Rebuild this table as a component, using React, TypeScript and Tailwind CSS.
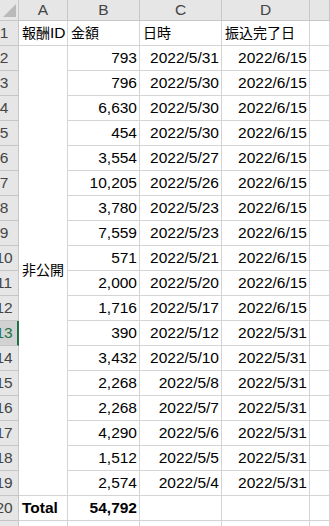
const rows: [string, string, string][] = [
  ["793", "2022/5/31", "2022/6/15"],
  ["796", "2022/5/30", "2022/6/15"],
  ["6,630", "2022/5/30", "2022/6/15"],
  ["454", "2022/5/30", "2022/6/15"],
  ["3,554", "2022/5/27", "2022/6/15"],
  ["10,205", "2022/5/26", "2022/6/15"],
  ["3,780", "2022/5/23", "2022/6/15"],
  ["7,559", "2022/5/23", "2022/6/15"],
  ["571", "2022/5/21", "2022/6/15"],
  ["2,000", "2022/5/20", "2022/6/15"],
  ["1,716", "2022/5/17", "2022/6/15"],
  ["390", "2022/5/12", "2022/5/31"],
  ["3,432", "2022/5/10", "2022/5/31"],
  ["2,268", "2022/5/8", "2022/5/31"],
  ["2,268", "2022/5/7", "2022/5/31"],
  ["4,290", "2022/5/6", "2022/5/31"],
  ["1,512", "2022/5/5", "2022/5/31"],
  ["2,574", "2022/5/4", "2022/5/31"],
];

const cell = "h-[25px] border-r border-b border-[#d4d4d4] leading-[24px] whitespace-nowrap overflow-hidden text-black";
const num = `${cell} text-right pr-[2px]`;

function RowHead({ n, active }: { n: number; active?: boolean }) {
  return (
    <div
      className={`h-[25px] border-b border-[#c6c6c6] overflow-hidden leading-[24px] ${
        active ? "bg-[#d2d2d2] text-[#217346] border-r-2 border-r-[#217346]" : "bg-[#e6e6e6] text-[#444] border-r border-r-[#c6c6c6]"
      }`}
    >
      <div className="w-[28px] -ml-[10px] text-center">{n}</div>
    </div>
  );
}

function ColHead({ label }: { label: string }) {
  return (
    <div className="h-[21px] bg-[#e6e6e6] border-r border-b border-[#c6c6c6] text-[#444] text-center leading-[20px]">
      {label}
    </div>
  );
}

export default function App() {
  return (
    <div
      className="w-[330px] h-[526px] overflow-hidden bg-white text-[15.5px]"
      style={{ fontFamily: '"Liberation Sans", "Noto Sans CJK JP", sans-serif' }}
    >
      <div className="grid grid-cols-[19px_49px_72px_82px_88px_1fr]">
        {/* corner */}
        <div className="h-[21px] bg-[#e6e6e6] border-r border-b border-[#c6c6c6] relative">
          <svg className="absolute left-0 top-0" width="18" height="20" viewBox="0 0 18 20">
            <polygon points="16,4 16,17 3,17" fill="#b9b9b9" />
          </svg>
        </div>
        <ColHead label="A" />
        <ColHead label="B" />
        <ColHead label="C" />
        <ColHead label="D" />
        <ColHead label="" />

        {/* row 1 */}
        <RowHead n={1} />
        <div className={`${cell} pl-[3px]`}>
          <span className="text-[14px]">報酬</span>ID
        </div>
        <div className={`${cell} pl-[3px] text-[14px]`}>金額</div>
        <div className={`${cell} pl-[3px] text-[14px]`}>日時</div>
        <div className={`${cell} pl-[3px] text-[14px]`}>振込完了日</div>
        <div className={cell} />

        {rows.map(([amt, date, paid], i) => (
          <>
            <RowHead key={`h${i}`} n={i + 2} active={i + 2 === 13} />
            {i === 0 && (
              <div className="row-span-18 border-r border-b border-[#d4d4d4] flex items-center pl-[3px] text-[14px] text-black">
                非公開
              </div>
            )}
            <div key={`a${i}`} className={num}>{amt}</div>
            <div key={`d${i}`} className={num}>{date}</div>
            <div key={`p${i}`} className={num}>{paid}</div>
            <div key={`e${i}`} className={cell} />
          </>
        ))}

        {/* row 20 */}
        <RowHead n={20} />
        <div className={`${cell} pl-[3px] font-bold`}>Total</div>
        <div className={`${num} font-bold`}>54,792</div>
        <div className={cell} />
        <div className={cell} />
        <div className={cell} />

        <RowHead n={21} />
        <div className={cell} />
        <div className={cell} />
        <div className={cell} />
        <div className={cell} />
        <div className={cell} />
      </div>
    </div>
  );
}
